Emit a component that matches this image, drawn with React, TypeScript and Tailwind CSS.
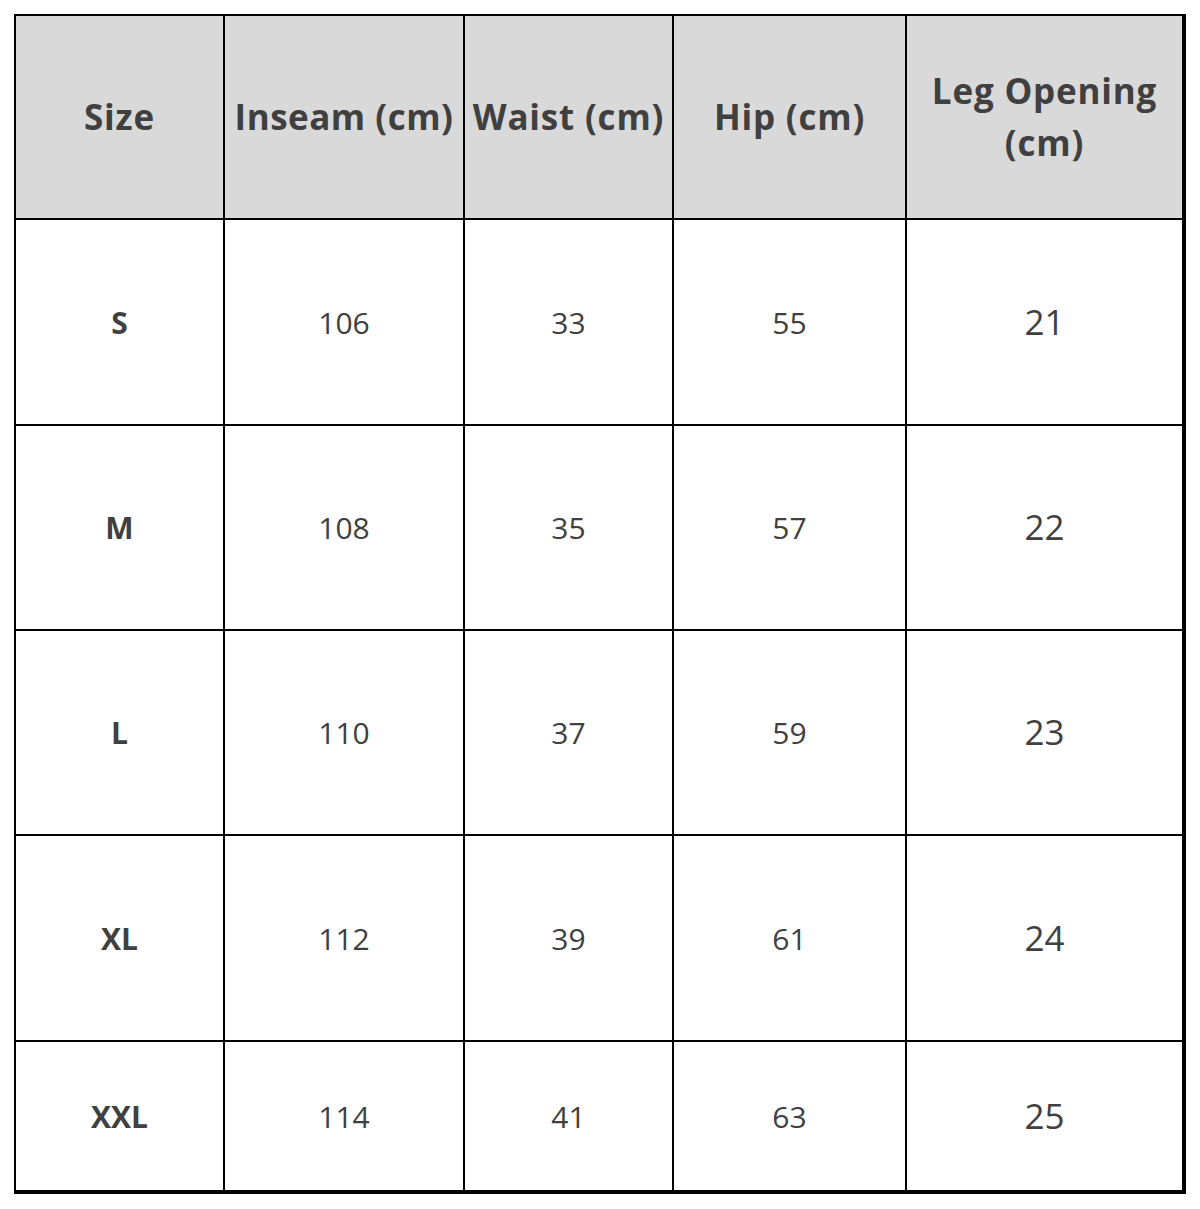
import React from "react";

const rows = [
  ["S", "106", "33", "55", "21"],
  ["M", "108", "35", "57", "22"],
  ["L", "110", "37", "59", "23"],
  ["XL", "112", "39", "61", "24"],
  ["XXL", "114", "41", "63", "25"],
];

export default function App() {
  return (
    <div className="w-[1200px] h-[1209px] bg-white pt-[14px] pl-[14px]" style={{ fontFamily: '"Open Sans", "Noto Sans", sans-serif' }}>
      <div className="grid w-[1172px] bg-black gap-[2px] pt-[2px] pl-[2px] pr-[4px] pb-[4px] grid-cols-[207px_238px_207px_231px_275px] grid-rows-[202px_204px_203px_203px_204px_148px] text-[#404040]">
        <div className="bg-[#d9d9d9] flex items-center justify-center text-[35px] font-bold tracking-[0.8px]">Size</div>
        <div className="bg-[#d9d9d9] flex items-center justify-center text-[35px] font-bold whitespace-nowrap tracking-[0.5px]">Inseam (cm)</div>
        <div className="bg-[#d9d9d9] flex items-center justify-center text-[35px] font-bold whitespace-nowrap tracking-[0.8px]">Waist (cm)</div>
        <div className="bg-[#d9d9d9] flex items-center justify-center text-[35px] font-bold whitespace-nowrap tracking-[0.8px]">Hip (cm)</div>
        <div className="bg-[#d9d9d9] flex items-center justify-center text-center text-[35px] font-bold leading-[52px] tracking-[0.8px]">Leg Opening<br />(cm)</div>
        {rows.map((r) => (
          <React.Fragment key={r[0]}>
            <div className="bg-white flex items-center justify-center text-[30px] font-bold">{r[0]}</div>
            <div className="bg-white flex items-center justify-center text-[30px]">{r[1]}</div>
            <div className="bg-white flex items-center justify-center text-[30px]">{r[2]}</div>
            <div className="bg-white flex items-center justify-center text-[30px]">{r[3]}</div>
            <div className="bg-white flex items-center justify-center text-[35px]">{r[4]}</div>
          </React.Fragment>
        ))}
      </div>
    </div>
  );
}
